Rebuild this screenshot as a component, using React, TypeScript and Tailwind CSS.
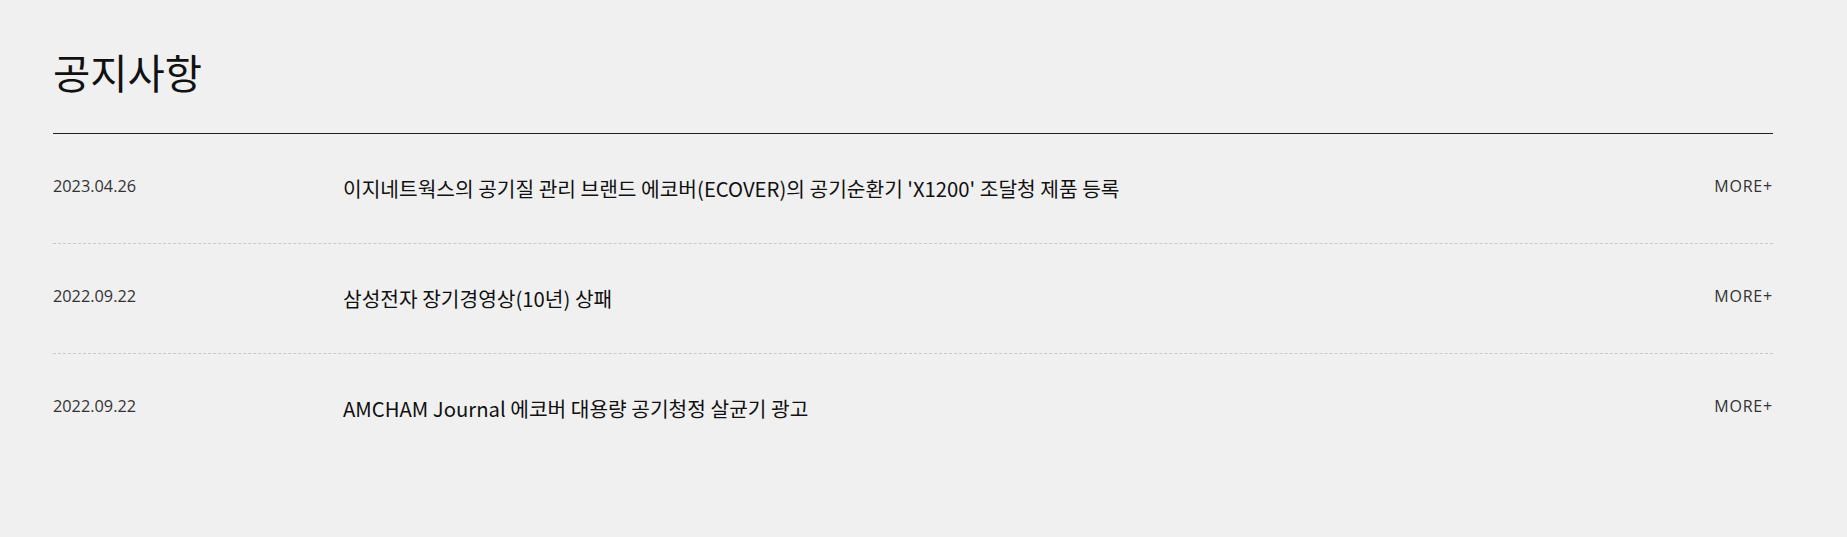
import React from "react";

const notices = [
  {
    date: "2023.04.26",
    title: "이지네트웍스의 공기질 관리 브랜드 에코버(ECOVER)의 공기순환기 'X1200' 조달청 제품 등록",
  },
  { date: "2022.09.22", title: "삼성전자 장기경영상(10년) 상패" },
  { date: "2022.09.22", title: "AMCHAM Journal 에코버 대용량 공기청정 살균기 광고" },
];

export default function App() {
  return (
    <div className="min-h-[537px] w-full bg-[#f0f0f0] text-[#111]">
      <div className="ml-[53px] w-[1720px] pt-[43px]">
        <h1
          className="text-[40.5px] leading-[58px] font-normal text-[#111]"
          style={{ fontFamily: '"Noto Sans CJK KR", "Noto Sans", sans-serif' }}
        >
          공지사항
        </h1>
        <div className="mt-[32px] h-px bg-[#222]" />
        <ul>
          {notices.map((n, i) => (
            <li
              key={i}
              className={
                "flex h-[110px] items-start pt-[39px] " +
                (i < notices.length - 1 ? "border-b border-dashed border-[#c9c9c9]" : "")
              }
            >
              <span
                className="w-[290px] shrink-0 pt-[1px] text-[16.3px] leading-[24px] font-normal text-[#333]"
                style={{ fontFamily: '"Open Sans", "Liberation Sans", sans-serif' }}
              >
                {n.date}
              </span>
              <a
                className="flex-1 text-[20.3px] leading-[30px] text-[#111]"
                style={{ fontFamily: '"Noto Sans CJK KR", "Noto Sans", sans-serif' }}
              >
                {n.title}
              </a>
              <span
                className="shrink-0 pt-[1px] text-[16px] leading-[24px] font-normal tracking-[0.8px] text-[#333]"
                style={{ fontFamily: '"Open Sans", "Liberation Sans", sans-serif' }}
              >
                MORE+
              </span>
            </li>
          ))}
        </ul>
      </div>
    </div>
  );
}
